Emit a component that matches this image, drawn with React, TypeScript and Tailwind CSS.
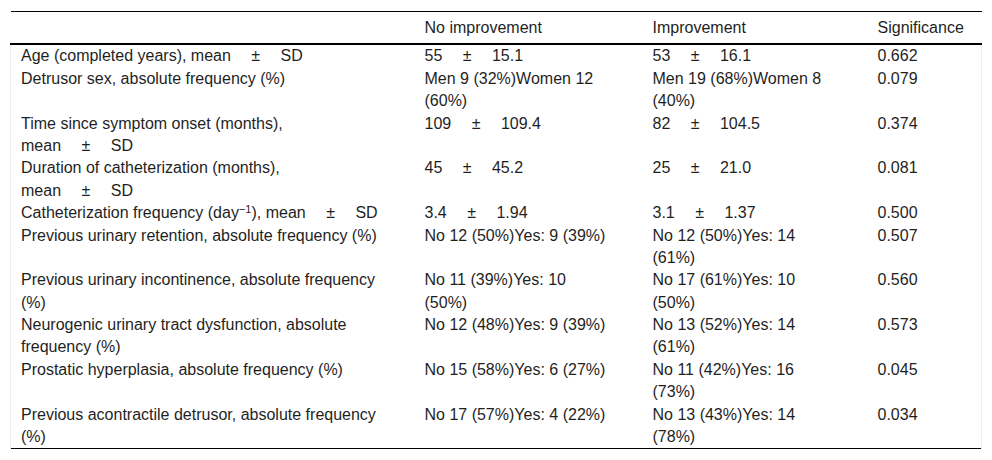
import React from "react";

// mean ± SD spacing in the source uses a normal space plus an em space on each side
const Pm = () => <span>{" \u2003±\u2003 "}</span>;

const MeanSd = () => (
  <span className="whitespace-nowrap">
    mean<Pm />SD
  </span>
);

interface Row {
  label: React.ReactNode;
  none: React.ReactNode;
  improved: React.ReactNode;
  sig: string;
}

const ROWS: Row[] = [
  {
    label: (
      <>
        Age (completed years), <MeanSd />
      </>
    ),
    none: (
      <>
        55<Pm />15.1
      </>
    ),
    improved: (
      <>
        53<Pm />16.1
      </>
    ),
    sig: "0.662",
  },
  {
    label: "Detrusor sex, absolute frequency (%)",
    none: "Men 9 (32%)Women 12 (60%)",
    improved: "Men 19 (68%)Women 8 (40%)",
    sig: "0.079",
  },
  {
    label: (
      <>
        Time since symptom onset (months), <MeanSd />
      </>
    ),
    none: (
      <>
        109<Pm />109.4
      </>
    ),
    improved: (
      <>
        82<Pm />104.5
      </>
    ),
    sig: "0.374",
  },
  {
    label: (
      <>
        Duration of catheterization (months), <MeanSd />
      </>
    ),
    none: (
      <>
        45<Pm />45.2
      </>
    ),
    improved: (
      <>
        25<Pm />21.0
      </>
    ),
    sig: "0.081",
  },
  {
    label: (
      <>
        Catheterization frequency (day<sup className="text-[11px]">−1</sup>), <MeanSd />
      </>
    ),
    none: (
      <>
        3.4<Pm />1.94
      </>
    ),
    improved: (
      <>
        3.1<Pm />1.37
      </>
    ),
    sig: "0.500",
  },
  {
    label: "Previous urinary retention, absolute frequency (%)",
    none: "No 12 (50%)Yes: 9 (39%)",
    improved: "No 12 (50%)Yes: 14 (61%)",
    sig: "0.507",
  },
  {
    label: "Previous urinary incontinence, absolute frequency (%)",
    none: "No 11 (39%)Yes: 10 (50%)",
    improved: "No 17 (61%)Yes: 10 (50%)",
    sig: "0.560",
  },
  {
    label: "Neurogenic urinary tract dysfunction, absolute frequency (%)",
    none: "No 12 (48%)Yes: 9 (39%)",
    improved: "No 13 (52%)Yes: 14 (61%)",
    sig: "0.573",
  },
  {
    label: "Prostatic hyperplasia, absolute frequency (%)",
    none: "No 15 (58%)Yes: 6 (27%)",
    improved: "No 11 (42%)Yes: 16 (73%)",
    sig: "0.045",
  },
  {
    label: "Previous acontractile detrusor, absolute frequency (%)",
    none: "No 17 (57%)Yes: 4 (22%)",
    improved: "No 13 (43%)Yes: 14 (78%)",
    sig: "0.034",
  },
];

export default function App() {
  return (
    <main
      className="min-h-[460px] bg-white px-[10px] pt-[11px] text-[16px] leading-[1.4] text-[#1f1f1f]"
      style={{ fontFamily: '"Liberation Sans", Arial, sans-serif' }}
    >
      <table className="w-[971px] table-fixed border-collapse text-left">
        <colgroup>
          <col className="w-[404px]" />
          <col className="w-[228px]" />
          <col className="w-[225px]" />
          <col className="w-[114px]" />
        </colgroup>
        <thead>
          <tr className="border-t border-b-2 border-t-black border-b-black">
            <th className="pt-[5px] pb-[4px] pl-[10px] font-normal"></th>
            <th className="pt-[5px] pb-[4px] pl-[10px] font-normal">No improvement</th>
            <th className="pt-[5px] pb-[4px] pl-[10px] font-normal">Improvement</th>
            <th className="pt-[5px] pb-[4px] pl-[10px] font-normal">Significance</th>
          </tr>
        </thead>
        <tbody className="border-b border-b-black">
          {ROWS.map((row, i) => (
            <tr key={i} className="align-top">
              <td className="border-l border-l-[#ececec] pl-[10px] pr-[20px]">{row.label}</td>
              <td className="pl-[10px] pr-[32px]">{row.none}</td>
              <td className="pl-[10px] pr-[29px]">{row.improved}</td>
              <td className="border-r border-r-[#ececec] pl-[10px]">{row.sig}</td>
            </tr>
          ))}
        </tbody>
      </table>
    </main>
  );
}
